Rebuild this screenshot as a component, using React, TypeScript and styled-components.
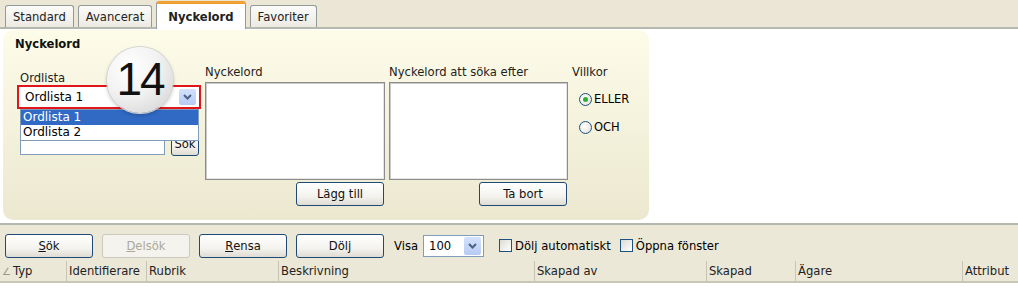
import React from "react";
import styled, { createGlobalStyle, css } from "styled-components";

const GlobalStyle = createGlobalStyle`
  html, body {
    margin: 0;
    padding: 0;
    background: #fff;
  }
  body {
    font-family: "DejaVu Sans", Verdana, sans-serif;
    font-size: 11.6px;
    color: #000;
  }
`;

const Page = styled.div`
  width: 1018px;
  height: 305px;
  overflow: hidden;
  background: #fff;
`;

const TabStrip = styled.div`
  height: 29px;
  background: #ebe6d5;
  border-bottom: 2px solid #b4b8ae;
  display: flex;
  align-items: flex-end;
  padding-left: 5px;
  gap: 4px;
  box-sizing: border-box;
`;

const Tab = styled.div<{ $active?: boolean }>`
  height: 22px;
  padding: 0 7px;
  display: flex;
  align-items: center;
  border: 1px solid #919b9c;
  border-bottom: none;
  border-radius: 3px 3px 0 0;
  background: linear-gradient(#fbfbf9, #eceae2);
  color: #222;
  box-sizing: border-box;
  ${(p) =>
    p.$active &&
    css`
      height: 28px;
      padding: 0 11px;
      background: #fff;
      border-top: 3px solid #f0a030;
      font-weight: bold;
      margin-bottom: -2px;
    `}
`;

const Panel = styled.div`
  width: 646px;
  margin: 1px 0 0 3px;
  padding: 6px 0 14px 14px;
  box-sizing: border-box;
  border-radius: 10px;
  background: linear-gradient(#fdfce9, #ece8d0);
`;

const PanelTitle = styled.div`
  font-weight: bold;
  line-height: 16px;
  height: 16px;
  margin-left: -2px;
  color: #111;
`;

const Columns = styled.div`
  margin-top: 13px;
  display: grid;
  grid-template-columns: 184px 180px 179px 70px;
  column-gap: 4px;
`;

const Column = styled.div<{ $offset?: number }>`
  display: flex;
  flex-direction: column;
  margin-top: ${(p) => p.$offset ?? 0}px;
  position: relative;
`;

const Label = styled.div<{ $indent?: number }>`
  line-height: 14px;
  height: 14px;
  padding-left: ${(p) => p.$indent ?? 0}px;
  color: #222;
`;

const SelectBox = styled.div`
  height: 24px;
  border: 2px solid #e0161b;
  background: #fff;
  box-sizing: border-box;
  display: flex;
  align-items: center;
  padding: 0 3px 0 6px;
  font-size: 12px;
`;

const SelectText = styled.span`
  flex: 1;
`;

const DropButton = styled.div<{ $h?: number }>`
  width: 17px;
  height: ${(p) => p.$h ?? 16}px;
  background: linear-gradient(#d3e1fb, #b7cbf5);
  border-radius: 2px;
  display: flex;
  align-items: center;
  justify-content: center;
`;

const Chevron = () => (
  <svg width="9" height="6" viewBox="0 0 9 6">
    <path d="M1 1 L4.5 4.5 L8 1" stroke="#4d6185" strokeWidth="2" fill="none" />
  </svg>
);

const DropList = styled.div`
  position: absolute;
  left: 3px;
  top: 38px;
  width: 179px;
  background: #fff;
  border: 1px solid #7f9db9;
  box-sizing: border-box;
  z-index: 2;
`;

const DropItem = styled.div<{ $selected?: boolean }>`
  height: 15px;
  line-height: 15px;
  padding-left: 2px;
  font-size: 12px;
  ${(p) =>
    p.$selected &&
    css`
      background: #316ac5;
      color: #fff;
    `}
`;

const SearchRow = styled.div`
  margin-top: 23px;
  display: flex;
  align-items: flex-end;
  gap: 6px;
  padding-left: 3px;
`;

const TextInput = styled.div`
  width: 145px;
  height: 15px;
  border: 1px solid #7f9db9;
  background: #fff;
  box-sizing: border-box;
  margin-bottom: 1px;
`;

const Button = styled.div<{ $w?: number; $disabled?: boolean }>`
  width: ${(p) => p.$w ?? 88}px;
  height: 24px;
  box-sizing: border-box;
  border: 1px solid #1f4a78;
  border-radius: 3px;
  background: linear-gradient(#ffffff, #f4f3ee 60%, #dedcd2);
  display: flex;
  align-items: center;
  justify-content: center;
  color: #111;
  ${(p) =>
    p.$disabled &&
    css`
      border-color: #cbc8bc;
      background: #f4f3ee;
      color: #aca899;
    `}
`;

const ListBox = styled.div`
  margin-top: 3px;
  height: 98px;
  background: #fff;
  border: 1px solid #8c8c8c;
  box-shadow: inset 1px 1px 0 #c9c9c9, inset -1px -1px 0 #e6e6e6;
  box-sizing: border-box;
`;

const ButtonRow = styled.div`
  margin-top: 2px;
  display: flex;
  justify-content: flex-end;
  padding-right: 1px;
`;

const RadioGroup = styled.div`
  display: flex;
  flex-direction: column;
  gap: 14px;
  margin-top: 13px;
  padding-left: 7px;
`;

const RadioRow = styled.div`
  display: flex;
  align-items: center;
  gap: 2px;
  height: 14px;
  font-size: 11.5px;
`;

const RadioCircle = styled.div<{ $checked?: boolean }>`
  width: 13px;
  height: 13px;
  border-radius: 50%;
  border: 1px solid #1c5180;
  box-sizing: border-box;
  background: radial-gradient(circle at 40% 40%, #fff, #e0ded4);
  display: flex;
  align-items: center;
  justify-content: center;
  &::after {
    content: "";
    width: 5px;
    height: 5px;
    border-radius: 50%;
    background: ${(p) => (p.$checked ? "#2fb12f" : "transparent")};
  }
`;

const Badge = styled.div`
  position: absolute;
  left: 90px;
  top: -24px;
  width: 66px;
  height: 66px;
  border-radius: 50%;
  background: radial-gradient(circle at 35% 30%, #ffffff 0%, #f2f2f2 45%, #cfcfcf 100%);
  box-shadow: 0 0 0 1px #d4d4d4, 0 2px 4px rgba(0, 0, 0, 0.25);
  display: flex;
  align-items: center;
  justify-content: center;
  font-family: "Liberation Sans", Arial, sans-serif;
  font-size: 46px;
  letter-spacing: -2px;
  color: #111;
  z-index: 3;
  padding-bottom: 2px;
  box-sizing: border-box;
`;

const Toolbar = styled.div`
  margin-top: 3px;
  border-top: 2px solid #b4b8ae;
  background: #ebe8d8;
  height: 38px;
  box-sizing: border-box;
  padding: 5px 0 0 5px;
  display: flex;
  align-items: center;
`;

const ToolbarItems = styled.div`
  display: flex;
  align-items: center;
  gap: 9px;
  height: 24px;
`;

const U = styled.span`
  text-decoration: underline;
`;

const SmallSelect = styled.div`
  width: 61px;
  height: 22px;
  border: 1px solid #7f9db9;
  background: #fff;
  box-sizing: border-box;
  display: flex;
  align-items: center;
  padding: 0 2px 0 5px;
  margin-left: -4px;
`;

const CheckLabel = styled.div<{ $gap?: number }>`
  display: flex;
  align-items: center;
  gap: 3px;
  margin-left: ${(p) => p.$gap ?? 0}px;
`;

const CheckBox = styled.div`
  width: 13px;
  height: 13px;
  border: 1px solid #1c5180;
  box-sizing: border-box;
  background: linear-gradient(135deg, #dcdbd3, #fff);
`;

const HeaderRow = styled.div`
  display: flex;
  height: 22px;
  background: #ebe8d8;
  border-bottom: 2px solid #c9c6b6;
  box-sizing: border-box;
`;

const HeaderCell = styled.div<{ $w: number }>`
  width: ${(p) => p.$w}px;
  flex: none;
  display: flex;
  align-items: center;
  padding-left: 2px;
  box-sizing: border-box;
  border-right: 1px solid #c7c4b4;
  color: #222;
  white-space: nowrap;
  &:last-child {
    border-right: none;
  }
`;

const SortMark = styled.span`
  color: #9a988c;
  margin-right: 2px;
  font-size: 10px;
`;

const headers: { label: string; w: number }[] = [
  { label: "Typ", w: 67 },
  { label: "Identifierare", w: 80 },
  { label: "Rubrik", w: 132 },
  { label: "Beskrivning", w: 256 },
  { label: "Skapad av", w: 172 },
  { label: "Skapad", w: 89 },
  { label: "Ägare", w: 167 },
  { label: "Attribut", w: 55 },
];

export default function App() {
  return (
    <Page>
      <GlobalStyle />
      <TabStrip>
        <Tab>Standard</Tab>
        <Tab>Avancerat</Tab>
        <Tab $active>Nyckelord</Tab>
        <Tab>Favoriter</Tab>
      </TabStrip>

      <Panel>
        <PanelTitle>Nyckelord</PanelTitle>
        <Columns>
          <Column $offset={6}>
            <Label $indent={3}>Ordlista</Label>
            <SelectBox>
              <SelectText>Ordlista 1</SelectText>
              <DropButton>
                <Chevron />
              </DropButton>
            </SelectBox>
            <DropList>
              <DropItem $selected>Ordlista 1</DropItem>
              <DropItem>Ordlista 2</DropItem>
            </DropList>
            <SearchRow>
              <TextInput />
              <Button $w={28}>Sök</Button>
            </SearchRow>
            <Badge>14</Badge>
          </Column>

          <Column>
            <Label>Nyckelord</Label>
            <ListBox />
            <ButtonRow>
              <Button>Lägg till</Button>
            </ButtonRow>
          </Column>

          <Column>
            <Label>Nyckelord att söka efter</Label>
            <ListBox />
            <ButtonRow>
              <Button>Ta bort</Button>
            </ButtonRow>
          </Column>

          <Column>
            <Label>Villkor</Label>
            <RadioGroup>
              <RadioRow>
                <RadioCircle $checked />
                ELLER
              </RadioRow>
              <RadioRow>
                <RadioCircle />
                OCH
              </RadioRow>
            </RadioGroup>
          </Column>
        </Columns>
      </Panel>

      <Toolbar>
        <ToolbarItems>
          <Button>
            <U>S</U>ök
          </Button>
          <Button $disabled>
            <U>D</U>elsök
          </Button>
          <Button>
            <U>R</U>ensa
          </Button>
          <Button>Dölj</Button>
          <span style={{ marginLeft: 1 }}>Visa</span>
          <SmallSelect>
            <SelectText>100</SelectText>
            <DropButton $h={18}>
              <Chevron />
            </DropButton>
          </SmallSelect>
          <CheckLabel $gap={6}>
            <CheckBox />
            Dölj automatiskt
          </CheckLabel>
          <CheckLabel>
            <CheckBox />
            Öppna fönster
          </CheckLabel>
        </ToolbarItems>
      </Toolbar>

      <HeaderRow>
        {headers.map((h, i) => (
          <HeaderCell key={h.label} $w={h.w}>
            {i === 0 && <SortMark>∠</SortMark>}
            {h.label}
          </HeaderCell>
        ))}
      </HeaderRow>
    </Page>
  );
}
